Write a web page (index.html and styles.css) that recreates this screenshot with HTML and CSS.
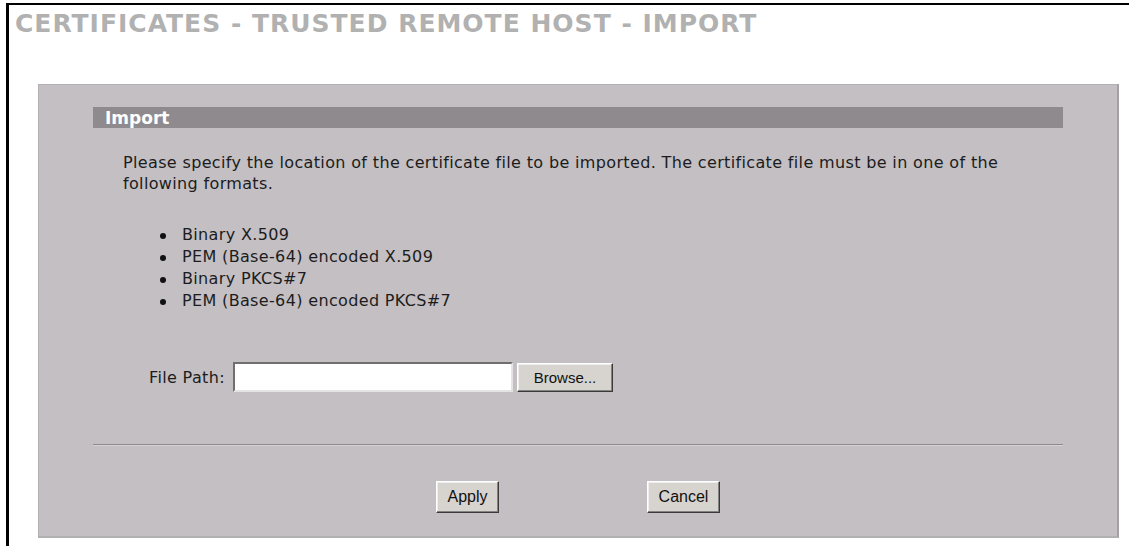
FILE: index.html
```html
<!DOCTYPE html>
<html lang="en">
<head>
<meta charset="utf-8">
<title>Certificates - Trusted Remote Host - Import</title>
<link rel="stylesheet" href="styles.css">
</head>
<body>
<div class="frame">
  <h1 class="title">CERTIFICATES - TRUSTED REMOTE HOST - IMPORT</h1>
  <div class="panel">
    <div class="section-head">Import</div>
    <p class="intro">Please specify the location of the certificate file to be imported. The certificate file must be in one of the<br>following formats.</p>
    <ul class="formats">
      <li>Binary X.509</li>
      <li>PEM (Base-64) encoded X.509</li>
      <li>Binary PKCS#7</li>
      <li>PEM (Base-64) encoded PKCS#7</li>
    </ul>
    <div class="file-row">
      <label class="file-label" for="filepath">File Path:</label>
      <input class="file-input" id="filepath" type="text">
      <button class="btn browse" type="button">Browse...</button>
    </div>
    <hr class="sep">
    <div class="actions">
      <button class="btn apply" type="button">Apply</button>
      <button class="btn cancel" type="button">Cancel</button>
    </div>
  </div>
</div>
</body>
</html>
```

FILE: styles.css
```css
html, body {
  margin: 0;
  padding: 0;
  background: #ffffff;
}

body {
  font-family: "DejaVu Sans", Verdana, sans-serif;
  color: #1c1c1c;
}

.frame {
  margin: 3px 0 0 6px;
  border-top: 2px solid #000;
  border-left: 3px solid #000;
  min-height: calc(100vh - 5px);
  box-sizing: border-box;
  background: #ffffff;
}

.title {
  margin: 0;
  padding: 4px 0 0 6px;
  font-family: "DejaVu Sans", Verdana, sans-serif;
  font-size: 25px;
  font-weight: bold;
  line-height: 30px;
  color: #b1b1b1;
  letter-spacing: 1px;
}

.panel {
  margin: 45px 0 0 29px;
  width: 1081px;
  box-sizing: border-box;
  background: #c3bfc3;
  border-top: 1px solid #b3b0b3;
  border-left: 1px solid #b3b0b3;
  border-right: 2px solid #a3a1a3;
  border-bottom: 2px solid #b2b0b2;
  padding: 22px 54px 23px 54px;
}

.section-head {
  height: 21px;
  box-sizing: border-box;
  background: #8e8a8e;
  color: #ffffff;
  font-size: 17px;
  font-weight: bold;
  line-height: 18px;
  padding: 2px 0 0 12px;
}

.intro {
  margin: 24px 0 0 0;
  padding-left: 30px;
  font-size: 16px;
  letter-spacing: 0.35px;
  line-height: 21px;
}

.formats {
  list-style: none;
  margin: 30px 0 0 0;
  padding: 0 0 0 67px;
  font-size: 16px;
  letter-spacing: 0.35px;
  line-height: 22px;
}

.formats li::before {
  content: "";
  display: inline-block;
  width: 6px;
  height: 6px;
  border-radius: 50%;
  background: #111;
  margin-right: 16px;
  vertical-align: middle;
}

.file-row {
  margin-top: 50px;
  height: 30px;
  display: flex;
  align-items: center;
  padding-left: 56px;
}

.file-label {
  width: 80px;
  margin-right: 4px;
  font-size: 16px;
  letter-spacing: 0.35px;
  white-space: nowrap;
}

.file-input {
  width: 280px;
  height: 30px;
  box-sizing: border-box;
  margin: 0;
  background: #ffffff;
  border-top: 2px solid #6f6f6f;
  border-left: 2px solid #6f6f6f;
  border-right: 2px solid #e6e4e2;
  border-bottom: 2px solid #e6e4e2;
  outline: none;
}

.btn {
  box-sizing: border-box;
  margin: 0;
  padding: 0;
  background: #d7d3ce;
  font-family: "Liberation Sans", Arial, sans-serif;
  font-size: 16px;
  color: #111;
  border-top: 1px solid #ffffff;
  border-left: 1px solid #ffffff;
  border-right: 1px solid #3a3a3a;
  border-bottom: 1px solid #3a3a3a;
  box-shadow: inset -1px -1px 0 #838383, inset 1px 1px 0 #eeeeee;
}

.browse {
  width: 96px;
  height: 29px;
  margin-left: 4px;
  font-size: 15px;
}

.sep {
  margin: 52px 0 0 0;
  height: 0;
  border: 0;
  border-top: 1px solid #8c8a8a;
  border-bottom: 1px solid #d4d2d2;
}

.actions {
  margin-top: 35px;
  display: flex;
  justify-content: center;
  gap: 148px;
}

.apply {
  width: 63px;
  height: 32px;
}

.cancel {
  width: 73px;
  height: 32px;
}
```
